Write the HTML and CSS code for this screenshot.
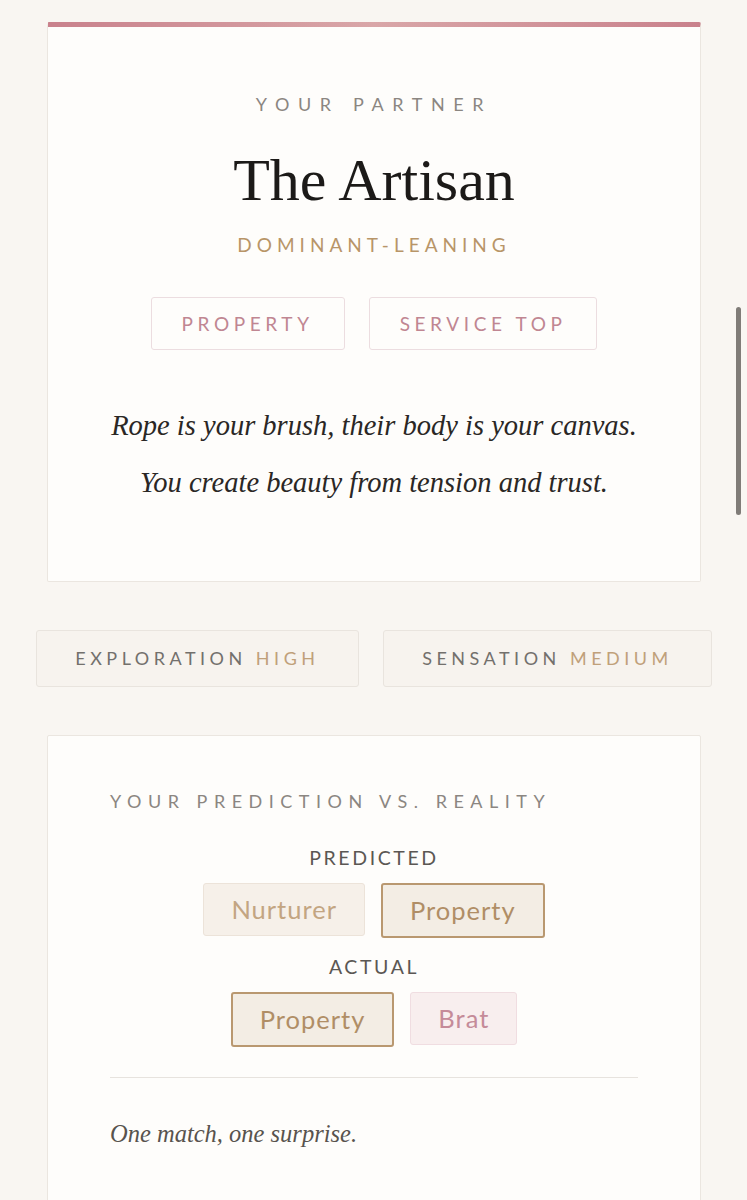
FILE: index.html
```html
<!DOCTYPE html>
<html lang="en">
  <head>
    <meta charset="utf-8" />
    <title>Your Partner</title>
    <link rel="stylesheet" href="styles.css">
  </head>

  <body>
    <div class="page">
      <div class="card card-result">
        <div class="eyebrow">Your Partner</div>
        <h1 class="archetype">The Artisan</h1>
        <div class="leaning">Dominant-Leaning</div>
        <div class="tags">
          <span class="tag">Property</span>
          <span class="tag">Service Top</span>
        </div>
        <p class="quote">
          Rope is your brush, their body is your canvas.<br>
          You create beauty from tension and trust.
        </p>
      </div>

      <div class="stats">
        <div class="stat">Exploration <span class="level">High</span></div>
        <div class="stat">Sensation <span class="level">Medium</span></div>
      </div>

      <div class="card card-compare">
        <div class="eyebrow eyebrow-left">Your Prediction vs. Reality</div>
        <div class="row-label">Predicted</div>
        <div class="pills">
          <span class="pill pill-muted">Nurturer</span>
          <span class="pill pill-match">Property</span>
        </div>
        <div class="row-label">Actual</div>
        <div class="pills">
          <span class="pill pill-match">Property</span>
          <span class="pill pill-rose">Brat</span>
        </div>
        <hr class="divider">
        <p class="verdict">One match, one surprise.</p>
      </div>
    </div>

    <div class="scroll-thumb"></div>
  </body>
</html>
```

FILE: styles.css
```css
body {
  margin: 0;
  background-color: #f9f6f2;
  font-family: Lato, "Open Sans", sans-serif;
  color: #2a2725;
}
.page {
  padding: 22px 46px 40px 47px;
}
.card {
  background-color: #fefdfb;
  border: 1.5px solid #ebe6e0;
  border-radius: 2px;
}
.card-result {
  border-top: 5px solid transparent;
  background:
    linear-gradient(90deg, #c9818c, #d9a6a8 50%, #c9818c) border-box top left / 100% 5px no-repeat,
    linear-gradient(#fefdfb, #fefdfb) padding-box;
  padding: 66px 20px 70px;
  text-align: center;
}
.eyebrow {
  font-size: 18px;
  line-height: 22px;
  letter-spacing: 8.6px;
  text-transform: uppercase;
  color: #8b8681;
}
.archetype {
  margin: 32px 0 0;
  font-family: "Liberation Serif", serif;
  font-weight: 400;
  font-size: 60px;
  line-height: 66px;
  color: #1c1a18;
}
.leaning {
  margin-top: 21px;
  font-size: 19px;
  line-height: 22px;
  letter-spacing: 5px;
  text-transform: uppercase;
  color: #b89568;
}
.tags {
  display: flex;
  justify-content: center;
  gap: 24px;
  margin-top: 41px;
}
.tag {
  padding: 0 30px;
  height: 51px;
  line-height: 51px;
  border: 1.5px solid #ecdde0;
  border-radius: 3px;
  font-size: 19px;
  letter-spacing: 4.6px;
  text-transform: uppercase;
  color: #c08692;
}
.quote {
  margin: 47px 0 0;
  font-family: "Liberation Serif", serif;
  font-style: italic;
  font-size: 28.5px;
  line-height: 57px;
  color: #2a2725;
}
.stats {
  display: flex;
  gap: 24px;
  margin: 48px -11px 0;
}
.stat {
  flex: 1 1 auto;
  height: 55px;
  line-height: 55px;
  background-color: #f7f3ee;
  border: 1.5px solid #e9e4de;
  border-radius: 3px;
  text-align: center;
  font-size: 18px;
  letter-spacing: 4.5px;
  text-transform: uppercase;
  color: #73706c;
}
.stat .level {
  color: #c0a07a;
}
.card-compare {
  margin-top: 48px;
  padding: 54px 62px 50px;
  text-align: center;
}
.eyebrow-left {
  text-align: left;
  letter-spacing: 6.5px;
}
.row-label {
  margin-top: 35px;
  font-size: 19.5px;
  line-height: 22px;
  letter-spacing: 2.6px;
  text-transform: uppercase;
  color: #5b5753;
}
.pills + .row-label {
  margin-top: 18px;
}
.pills {
  display: flex;
  justify-content: center;
  gap: 16px;
  margin-top: 14px;
}
.pill {
  height: 51px;
  line-height: 51px;
  padding: 0 27px;
  border: 1.5px solid #ece3d9;
  border-radius: 3px;
  font-size: 25.5px;
  letter-spacing: 1px;
}
.pill-muted {
  background-color: #f6f0e9;
  color: #c3a582;
}
.pill-match {
  background-color: #f3ede4;
  border: 2px solid #b99870;
  color: #b08e66;
}
.pill-rose {
  background-color: #f8eeee;
  border-color: #f0dde1;
  color: #c58b99;
}
.divider {
  margin: 30px 0 0;
  border: none;
  border-top: 1.5px solid #e7e3de;
}
.verdict {
  margin: 36px 0 0;
  text-align: left;
  font-family: "Liberation Serif", serif;
  font-style: italic;
  font-size: 24.5px;
  line-height: 40px;
  color: #58534e;
}
.scroll-thumb {
  position: fixed;
  top: 307px;
  right: 6px;
  width: 5px;
  height: 208px;
  border-radius: 3px;
  background-color: #807c78;
}
```
